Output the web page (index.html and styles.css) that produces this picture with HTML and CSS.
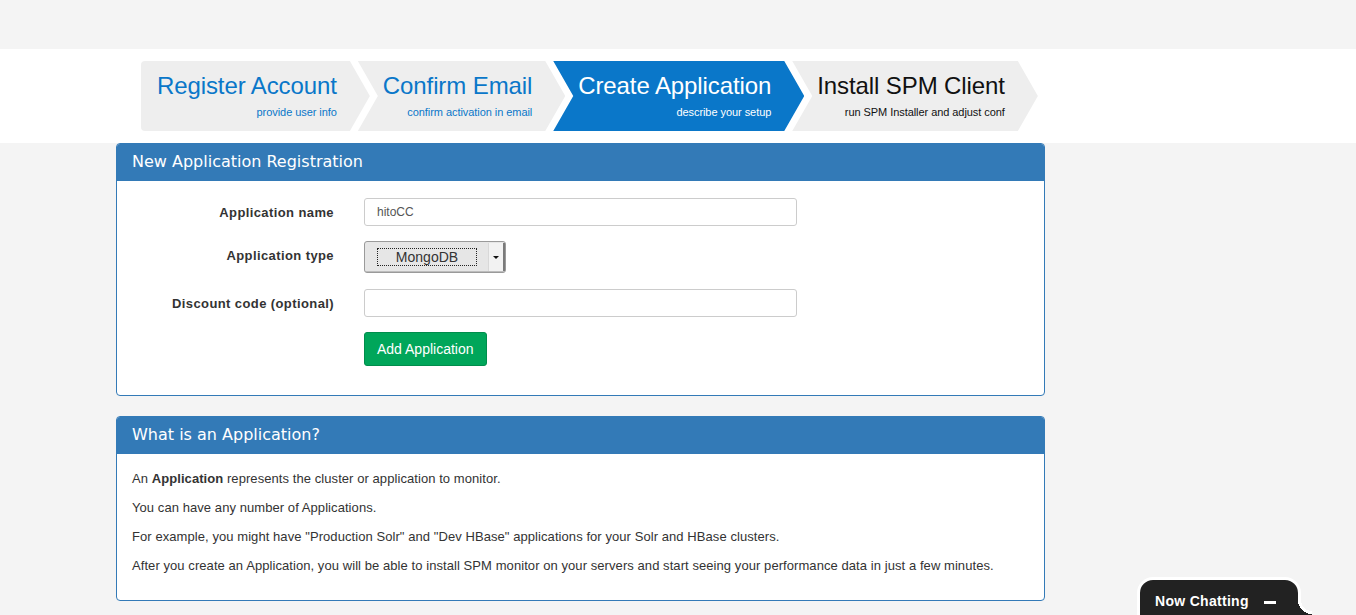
FILE: index.html
```html
<!DOCTYPE html>
<html>
<head>
<meta charset="utf-8">
<link rel="stylesheet" href="styles.css">
</head>
<body>
<div class="topbar"></div>
<div class="header">
  <div class="steps">
    <div class="step first done">
      <div class="step-title">Register Account</div>
      <div class="step-sub">provide user info</div>
    </div>
    <div class="step done">
      <div class="step-title">Confirm Email</div>
      <div class="step-sub">confirm activation in email</div>
    </div>
    <div class="step active">
      <div class="step-title">Create Application</div>
      <div class="step-sub">describe your setup</div>
    </div>
    <div class="step todo">
      <div class="step-title">Install SPM Client</div>
      <div class="step-sub">run SPM Installer and adjust conf</div>
    </div>
  </div>
</div>
<div class="content">
  <div class="panel">
    <div class="panel-heading">New Application Registration</div>
    <div class="panel-body form">
      <label class="label">Application name</label>
      <div class="field"><input class="input" type="text" value="hitoCC"></div>
      <label class="label up">Application type</label>
      <div class="field">
        <div class="select">
          <span class="select-main"><span class="select-focus">MongoDB</span></span>
          <span class="select-arrow"><span class="caret"></span></span>
        </div>
      </div>
      <label class="label shift">Discount code (optional)</label>
      <div class="field shift"><input class="input" type="text" value=""></div>
      <div></div>
      <div class="field"><button class="btn">Add Application</button></div>
    </div>
  </div>
  <div class="panel">
    <div class="panel-heading">What is an Application?</div>
    <div class="panel-body text">
      <p>An <b>Application</b> represents the cluster or application to monitor.</p>
      <p>You can have any number of Applications.</p>
      <p>For example, you might have "Production Solr" and "Dev HBase" applications for your Solr and HBase clusters.</p>
      <p>After you create an Application, you will be able to install SPM monitor on your servers and start seeing your performance data in just a few minutes.</p>
    </div>
  </div>
</div>
<div class="chat">
  <span class="chat-title">Now Chatting</span>
  <span class="chat-min"></span>
</div>
</body>
</html>
```
FILE: styles.css
```css
html, body {
  margin: 0;
  padding: 0;
}
body {
  background: #f4f4f4;
  font-family: "Liberation Sans", Arial, sans-serif;
  color: #333;
  height: 615px;
  overflow: hidden;
  position: relative;
}
.topbar {
  height: 49px;
}
.header {
  background: #fff;
  height: 94px;
  padding-top: 12px;
  box-sizing: border-box;
}
.steps {
  display: flex;
  margin-left: 141px;
}
.step {
  height: 70px;
  box-sizing: border-box;
  padding: 11px 33px 0 25px;
  background: #eeeeee;
  text-align: right;
  margin-left: -12px;
  clip-path: polygon(0 0, calc(100% - 20px) 0, 100% 50%, calc(100% - 20px) 100%, 0 100%, 20px 50%);
}
.step.first {
  margin-left: 0;
  padding-left: 16px;
  border-radius: 4px 0 0 4px;
  clip-path: polygon(0 0, calc(100% - 20px) 0, 100% 50%, calc(100% - 20px) 100%, 0 100%);
}
.step-title {
  font-size: 24px;
  line-height: 28px;
  letter-spacing: -0.1px;
  text-align: left;
  white-space: nowrap;
}
.step-sub {
  font-size: 11px;
  line-height: 14px;
  letter-spacing: -0.06px;
  margin-top: 5px;
  white-space: nowrap;
}
.step.done .step-title,
.step.done .step-sub {
  color: #0a77c9;
}
.step.active {
  background: #0a77c9;
}
.step.active .step-title,
.step.active .step-sub {
  color: #fff;
}
.step.todo .step-title,
.step.todo .step-sub {
  color: #111;
}
.content {
  margin-left: 116px;
  width: 929px;
}
.panel {
  border: 1px solid #337ab7;
  border-radius: 4px;
  background: #fff;
  margin-bottom: 20px;
  overflow: hidden;
}
.panel-heading {
  background: #337ab7;
  color: #fff;
  font-family: "DejaVu Sans", sans-serif;
  font-size: 16px;
  line-height: 19px;
  padding: 8px 15px 10px;
}
.panel-body.form {
  display: grid;
  grid-template-columns: 217px 433px;
  column-gap: 30px;
  row-gap: 15px;
  padding: 17px 0 29px;
  align-items: center;
}
.shift {
  margin-top: 1px;
}
.up {
  margin-bottom: 4px;
}
.label {
  text-align: right;
  font-weight: bold;
  font-size: 13px;
  letter-spacing: 0.4px;
  color: #333;
}
.field {
  display: flex;
}
.input {
  width: 433px;
  height: 28px;
  box-sizing: border-box;
  border: 1px solid #ccc;
  border-radius: 3px;
  padding: 0 12px;
  font-family: "Liberation Sans", Arial, sans-serif;
  font-size: 12px;
  color: #555;
  background: #fff;
  margin: 0;
}
.select {
  display: flex;
  width: 142px;
  height: 32px;
  box-sizing: border-box;
  border: 1px solid #9a9a9a;
  border-radius: 3px;
  background: #e6e6e6;
  box-shadow: inset -1px -1px 0 #bdbdbd;
}
.select-main {
  flex: 1;
  display: flex;
  align-items: center;
  padding-left: 12px;
}
.select-focus {
  width: 100px;
  height: 18px;
  box-sizing: border-box;
  border: 1px dotted #222;
  text-align: center;
  font-size: 14px;
  line-height: 16px;
  color: #333;
}
.select-arrow {
  width: 14px;
  margin: 1px 0 1px 0;
  background: #f2f2f2;
  border-left: 1px solid #d8d8d8;
  border-right: 2px solid #7a7a7a;
  display: flex;
  align-items: center;
  justify-content: center;
}
.caret {
  width: 0;
  height: 0;
  border-left: 3px solid transparent;
  border-right: 3px solid transparent;
  border-top: 3px solid #111;
}
.btn {
  height: 34px;
  padding: 0 12px;
  background: #00a65a;
  border: 1px solid #008d4c;
  border-radius: 3px;
  color: #fff;
  font-family: "Liberation Sans", Arial, sans-serif;
  font-size: 14px;
  margin: 0;
}
.panel-body.text {
  padding: 15px 15px 15px;
  font-size: 13px;
  line-height: 19px;
  letter-spacing: 0.07px;
}
.panel-body.text p {
  margin: 0 0 10px;
}
.chat {
  position: absolute;
  left: 1137px;
  top: 577px;
  width: 164px;
  height: 50px;
  background: #222;
  border: 3px solid #fff;
  border-radius: 16px 16px 0 0;
  box-sizing: border-box;
  display: flex;
  align-items: flex-start;
  padding: 13px 0 0 15px;
}
.chat::after {
  content: "";
  position: absolute;
  right: -14px;
  top: 20px;
  width: 14px;
  height: 30px;
  background: radial-gradient(circle at 100% 0, transparent 11px, #fff 11px, #fff 14px, #222 14px);
}
.chat-title {
  color: #fff;
  font-weight: bold;
  font-size: 14px;
  letter-spacing: 0.3px;
}
.chat-min {
  width: 12px;
  height: 3px;
  background: #fff;
  margin: 8px 0 0 15px;
}
```
